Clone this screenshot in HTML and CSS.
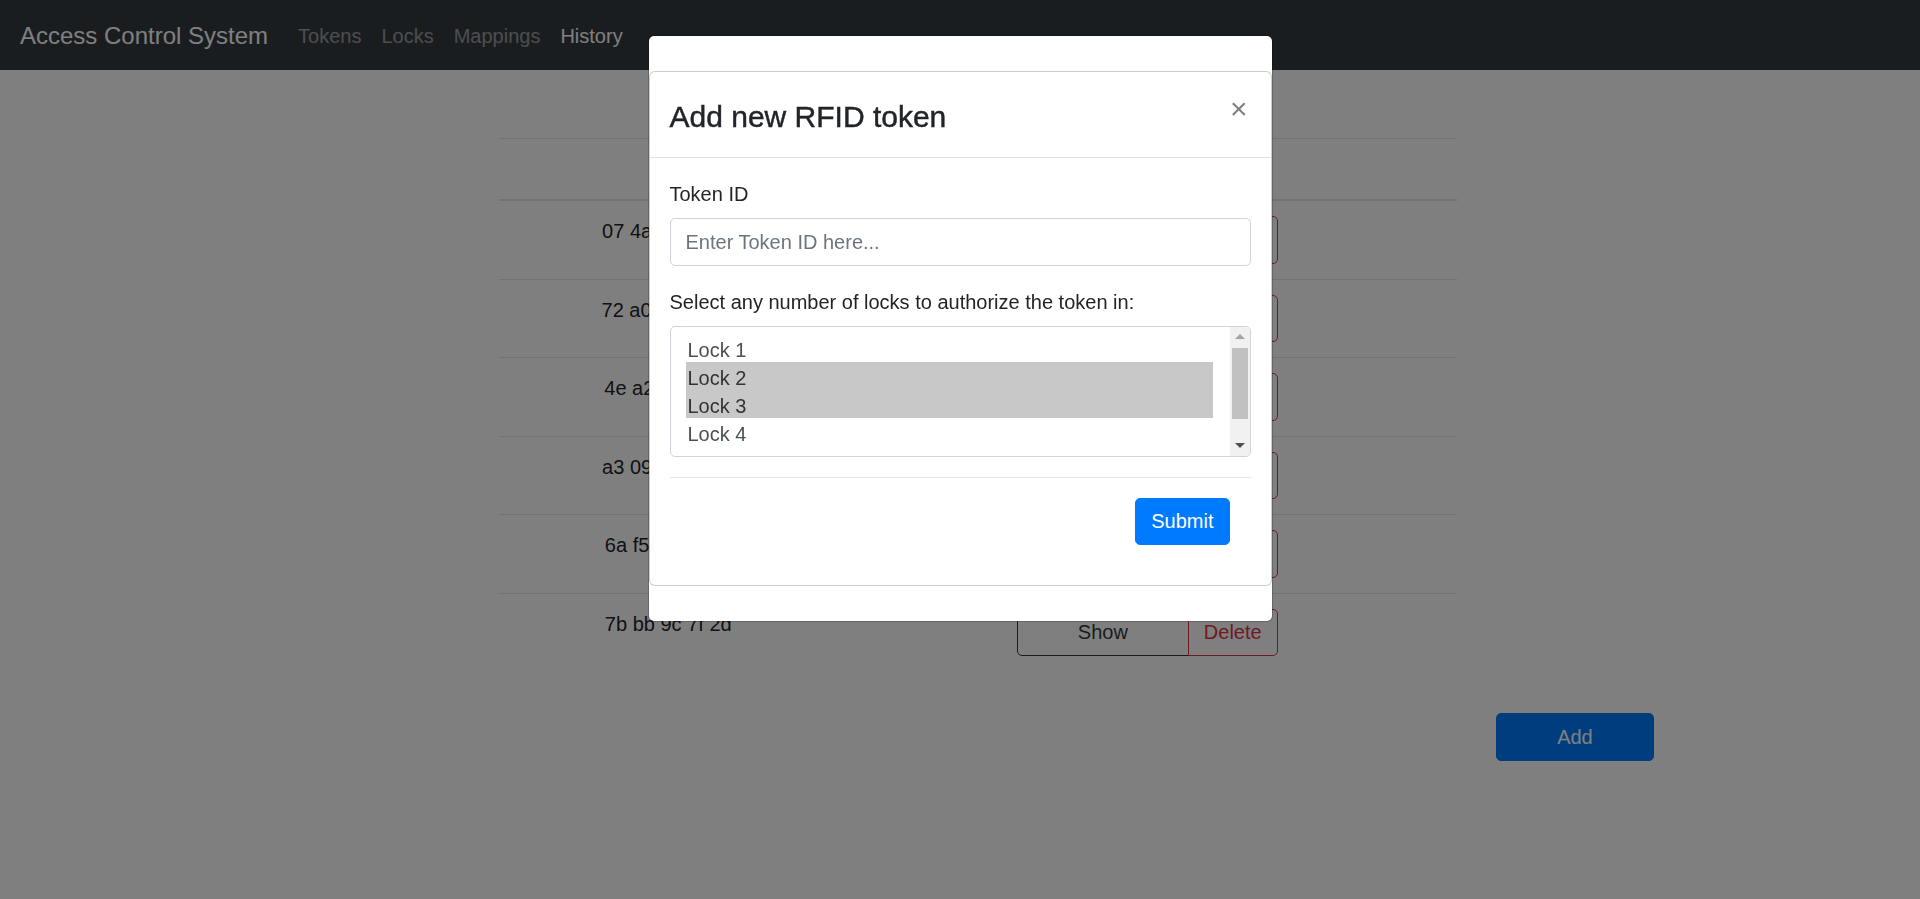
FILE: index.html
```html
<!DOCTYPE html>
<html lang="en">
<head>
<meta charset="utf-8">
<title>Access Control System</title>
<link rel="stylesheet" href="styles.css">
</head>
<body>
<nav class="navbar">
  <a class="brand">Access Control System</a>
  <ul class="nav">
    <li><a class="nav-link">Tokens</a></li>
    <li><a class="nav-link">Locks</a></li>
    <li><a class="nav-link">Mappings</a></li>
    <li><a class="nav-link active">History</a></li>
  </ul>
</nav>

<main class="container">
  <table class="tokens">
    <colgroup><col class="c-id"><col class="c-act"></colgroup>
    <thead><tr><th>&nbsp;</th><th>&nbsp;</th></tr></thead>
    <tbody>
      <tr><td>07 4a 1c 9e b3</td><td><div class="btn-group"><button class="btn btn-show">Show</button><button class="btn btn-delete">Delete</button></div></td></tr>
      <tr><td>72 a0 5d 33 e8</td><td><div class="btn-group"><button class="btn btn-show">Show</button><button class="btn btn-delete">Delete</button></div></td></tr>
      <tr><td>4e a2 90 6b 1f</td><td><div class="btn-group"><button class="btn btn-show">Show</button><button class="btn btn-delete">Delete</button></div></td></tr>
      <tr><td>a3 09 d4 7c 52</td><td><div class="btn-group"><button class="btn btn-show">Show</button><button class="btn btn-delete">Delete</button></div></td></tr>
      <tr><td>6a f5 e1 08 c6</td><td><div class="btn-group"><button class="btn btn-show">Show</button><button class="btn btn-delete">Delete</button></div></td></tr>
      <tr><td>7b bb 9c 7f 2d</td><td><div class="btn-group"><button class="btn btn-show">Show</button><button class="btn btn-delete">Delete</button></div></td></tr>
    </tbody>
  </table>
  <div class="add-row"><button class="btn btn-primary btn-wide">Add</button></div>
</main>

<div class="backdrop"></div>

<div class="modal">
  <div class="modal-dialog">
    <div class="modal-content outer">
      <div class="modal-dialog inner">
        <div class="modal-content">
          <div class="modal-header">
            <h4 class="modal-title">Add new RFID token</h4>
            <button class="close" type="button">×</button>
          </div>
          <div class="modal-body">
            <div class="form-group">
              <label>Token ID</label>
              <input class="form-control" type="text" placeholder="Enter Token ID here...">
            </div>
            <div class="form-group">
              <label>Select any number of locks to authorize the token in:</label>
              <div class="listbox">
                <div class="options">
                  <div class="option">Lock 1</div>
                  <div class="option selected">Lock 2</div>
                  <div class="option selected">Lock 3</div>
                  <div class="option">Lock 4</div>
                  <div class="option">Lock 5</div>
                </div>
                <div class="scrollbar">
                  <div class="sb-btn"><span class="tri-up"></span></div>
                  <div class="sb-thumb"></div>
                  <div class="sb-track"></div>
                  <div class="sb-btn"><span class="tri-down"></span></div>
                </div>
              </div>
            </div>
            <hr class="divider">
            <div class="actions"><button class="btn btn-primary" type="button">Submit</button></div>
          </div>
        </div>
      </div>
    </div>
  </div>
</div>
</body>
</html>
```

FILE: styles.css
```css
html, body {
  margin: 0;
  padding: 0;
}
body {
  font-family: "Liberation Sans", Arial, sans-serif;
  font-size: 20px;
  line-height: 1.5;
  color: #212529;
  background: #fff;
  overflow: hidden;
}

/* navbar */
.navbar {
  display: flex;
  align-items: center;
  height: 70px;
  box-sizing: border-box;
  padding: 10px 20px;
  background: #343a40;
}
.brand {
  font-size: 24px;
  line-height: 37.5px;
  padding: 7px 0 5.5px;
  margin-right: 20px;
  color: #fff;
}
.nav {
  display: flex;
  list-style: none;
  margin: 0;
  padding: 0;
}
.nav-link {
  display: block;
  padding: 11px 10px 9px;
  color: rgba(255, 255, 255, .5);
}
.nav-link.active {
  color: #fff;
}

/* page */
.container {
  width: 1425px;
  margin: 0 auto;
  padding: 68px 18.75px 0;
  box-sizing: border-box;
}
.tokens {
  border-collapse: collapse;
  table-layout: fixed;
  width: 958px;
  margin-left: 233px;
}
.c-id { width: 338px; }
.c-act { width: 620px; }
.tokens th {
  padding: 15px;
  line-height: 30px;
  border-top: 1px solid #dee2e6;
  border-bottom: 2px solid #dee2e6;
}
.tokens td {
  padding: 15px;
  line-height: 30px;
  border-top: 1px solid #dee2e6;
  vertical-align: top;
  text-align: center;
}
.btn-group {
  display: inline-flex;
}
.btn {
  font-family: inherit;
  font-size: 20px;
  line-height: 30px;
  padding: 7.75px 15px;
  border: 1px solid transparent;
  border-radius: 5px;
  background: transparent;
  cursor: pointer;
}
.btn-show {
  border-color: #343a40;
  color: #343a40;
  padding-left: 60px;
  padding-right: 60px;
  border-radius: 5px 0 0 5px;
}
.btn-delete {
  border-color: #dc3545;
  color: #dc3545;
  border-radius: 0 5px 5px 0;
  margin-left: -1px;
}
.btn-primary {
  background: #007bff;
  border-color: #007bff;
  color: #fff;
}
.btn-wide {
  padding-left: 60px;
  padding-right: 60px;
}
.add-row {
  display: flex;
  justify-content: flex-end;
  margin-top: 42px;
}

/* backdrop */
.backdrop {
  position: fixed;
  inset: 0;
  background: #000;
  opacity: .5;
}

/* modal */
.modal {
  position: fixed;
  inset: 0;
  overflow: hidden;
}
.modal-dialog {
  width: 625px;
  margin: 35px auto;
}
.modal-dialog.inner {
  width: auto;
  margin: 35px 0;
}
.modal-content {
  background: #fff;
  border: 1px solid rgba(0, 0, 0, .2);
  border-radius: 6px;
  background-clip: padding-box;
}
.modal-header {
  display: flex;
  align-items: flex-start;
  justify-content: space-between;
  padding: 20px;
  border-bottom: 1px solid #dee2e6;
}
.modal-title {
  margin: 0;
  padding-top: 2px;
  height: 45px;
  box-sizing: border-box;
  font-size: 30px;
  line-height: 45px;
  font-weight: 500;
  -webkit-text-stroke: 0.45px #212529;
}
.close {
  padding: 22px 23px 18px 20px;
  margin: -20px -20px -20px auto;
  background: transparent;
  border: 0;
  font-family: inherit;
  font-size: 30px;
  font-weight: 400;
  line-height: 1;
  color: #000;
  opacity: .5;
}
.modal-body {
  padding: 20px;
}
.form-group {
  margin-bottom: 20px;
}
.form-group label {
  display: inline-block;
  margin-bottom: 10px;
  line-height: 32px;
  height: 30px;
}
.form-control {
  display: block;
  width: 100%;
  box-sizing: border-box;
  height: 47.5px;
  padding: 8.5px 15px 6.5px;
  font-family: inherit;
  font-size: 20px;
  line-height: 30px;
  color: #495057;
  background: #fff;
  border: 1px solid #ced4da;
  border-radius: 5px;
}
.form-control::placeholder {
  color: #6c757d;
}

/* list box */
.listbox {
  display: flex;
  height: 131px;
  box-sizing: border-box;
  border: 1px solid #ced4da;
  border-radius: 5px;
  overflow: hidden;
}
.options {
  flex: 1;
  padding: 7.5px 17px 0 15px;
  margin-bottom: 3px;
  overflow: hidden;
}
.option {
  height: 28px;
  line-height: 32px;
  padding: 0 2px;
  color: #495057;
  white-space: nowrap;
}
.option.selected {
  background: #c8c8c8;
  color: #333;
}
.scrollbar {
  width: 20px;
  background: #f1f1f1;
  display: flex;
  flex-direction: column;
  align-items: center;
}
.sb-btn {
  height: 20px;
  width: 100%;
  display: flex;
  align-items: center;
  justify-content: center;
}
.tri-up {
  width: 0;
  height: 0;
  border-left: 5px solid transparent;
  border-right: 5px solid transparent;
  border-bottom: 5px solid #a3a3a3;
}
.tri-down {
  width: 0;
  height: 0;
  border-left: 5px solid transparent;
  border-right: 5px solid transparent;
  border-top: 5px solid #505050;
}
.sb-thumb {
  width: 16px;
  height: 71px;
  margin-top: 1px;
  background: #c1c1c1;
}
.sb-track {
  flex: 1;
}
.divider {
  margin: 20px 0;
  border: 0;
  border-top: 1px solid rgba(0, 0, 0, .1);
}
.actions {
  display: flex;
  justify-content: flex-end;
  padding-right: 21px;
  margin-bottom: 20px;
}
```
